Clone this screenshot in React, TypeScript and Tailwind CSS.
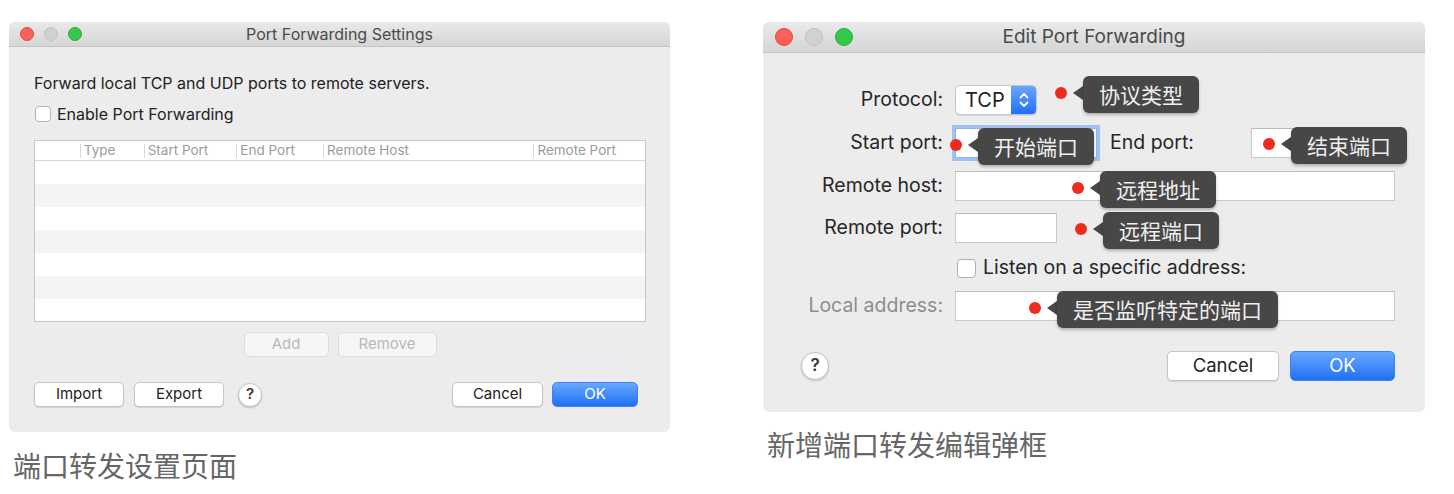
import React from 'react';

function Lights({ big }: { big?: boolean }) {
  const s = big ? 'w-[18px] h-[18px]' : 'w-[14px] h-[14px]';
  return (
    <div className={big ? 'flex items-center gap-[12px] pl-[12px]' : 'flex items-center gap-[10px] pl-[11px]'}>
      <span className={`${s} rounded-full bg-[#fc605b] border border-[#e0493f]`} />
      <span className={`${s} rounded-full bg-[#d1d1d1] border border-[#c0c0c0]`} />
      <span className={`${s} rounded-full bg-[#35c84b] border border-[#28ad3b]`} />
    </div>
  );
}

function Btn({ w, children, primary, disabled }: { w: string; children: React.ReactNode; primary?: boolean; disabled?: boolean }) {
  let look = 'bg-white border border-[#c6c6c6] text-[#222] shadow-[0_1px_1px_rgba(0,0,0,0.12)]';
  if (primary) look = 'bg-gradient-to-b from-[#66a8fc] to-[#1e6ff5] border border-[#3d83f3] text-white';
  if (disabled) look = 'bg-[#f6f6f6] border border-[#dcdcdc] text-[#b9b9b9]';
  return <div className={`${w} h-full rounded-[5px] flex items-center justify-center ${look}`}>{children}</div>;
}

function Help({ size }: { size: string }) {
  return (
    <div className={`${size} rounded-full bg-white border border-[#c4c4c4] shadow-[0_1px_2px_rgba(0,0,0,0.2)] flex items-center justify-center font-semibold text-[#333]`}>
      ?
    </div>
  );
}

function Tip({ pos, text }: { pos: string; text: string }) {
  return (
    <div className={`absolute ${pos} flex items-center h-[37px]`}>
      <div className="flex items-center mb-[4px]">
        <span className="w-[12px] h-[12px] rounded-full bg-[#ee2b1e]" />
        <span className="ml-[6px] w-0 h-0 border-y-[7px] border-y-transparent border-r-[10px] border-r-[#474747]" />
      </div>
      <span className="h-[37px] px-[16px] flex items-center rounded-[6px] bg-[#474747] text-[#efefef] text-[21px] font-['Noto_Sans_CJK_SC',sans-serif] shadow-[0_2px_3px_rgba(0,0,0,0.25)]">
        {text}
      </span>
    </div>
  );
}

const cols = [
  { w: 'w-[45px]', label: '' },
  { w: 'w-[64px]', label: 'Type' },
  { w: 'w-[93px]', label: 'Start Port' },
  { w: 'w-[87px]', label: 'End Port' },
  { w: 'w-[211px]', label: 'Remote Host' },
  { w: 'w-[112px]', label: 'Remote Port' },
];

function SettingsWindow() {
  return (
    <div className="w-[661px] h-[410px] rounded-[6px] bg-[#ececec] overflow-hidden flex flex-col">
      <div className="h-[25px] grid grid-cols-[1fr_auto_1fr] items-center bg-gradient-to-b from-[#e9e9e9] to-[#d6d6d6] border-b border-[#c4c4c4]">
        <Lights />
        <div className="text-[16px] text-[#4b4b4b]">Port Forwarding Settings</div>
        <div />
      </div>
      <div className="flex flex-col pl-[25px] pr-[24px] text-[#222]">
        <div className="mt-[26px] text-[16px] leading-[20px]">Forward local TCP and UDP ports to remote servers.</div>
        <div className="mt-[13px] flex items-center h-[16px] text-[16px]">
          <span className="ml-[1px] w-[16px] h-[16px] rounded-[4px] bg-white border border-[#b3b3b3]" />
          <span className="ml-[6px]">Enable Port Forwarding</span>
        </div>
        <div className="mt-[18px] h-[182px] overflow-hidden bg-white border border-[#c6c6c6] flex flex-col">
          <div className="h-[20px] shrink-0 flex border-b border-[#d6d6d6]">
            {cols.map((c, i) => (
              <div key={i} className={`${c.w} flex items-center text-[13.5px] text-[#9b9b9b]`}>
                {i > 0 && <span className="w-px h-[14px] bg-[#dadada]" />}
                <span className="pl-[3px]">{c.label}</span>
              </div>
            ))}
          </div>
          {[0, 1, 2, 3, 4, 5, 6].map((r) => (
            <div key={r} className={r % 2 ? 'h-[23px] shrink-0 bg-[#f4f4f4]' : 'h-[23px] shrink-0 bg-white'} />
          ))}
        </div>
        <div className="mt-[10px] h-[25px] flex justify-center gap-[9px] text-[15px]">
          <Btn w="w-[85px]" disabled>Add</Btn>
          <Btn w="w-[99px]" disabled>Remove</Btn>
        </div>
        <div className="mt-[25px] h-[25px] flex items-center text-[15px] mr-[8px]">
          <Btn w="w-[90px]">Import</Btn>
          <div className="ml-[10px] h-full flex">
            <Btn w="w-[90px]">Export</Btn>
          </div>
          <div className="ml-[14px]">
            <Help size="w-[24px] h-[24px] text-[15px]" />
          </div>
          <div className="flex-1" />
          <Btn w="w-[91px]">Cancel</Btn>
          <div className="ml-[9px] h-full flex">
            <Btn w="w-[86px]" primary>OK</Btn>
          </div>
        </div>
      </div>
    </div>
  );
}

function Field({ w, focus }: { w: string; focus?: boolean }) {
  return (
    <div
      className={`${w} h-full bg-white border ${
        focus ? 'border-[#8db4ee] shadow-[0_0_0_3px_#9ec2f3]' : 'border-[#c9c9c9] border-t-[#bdbdbd]'
      }`}
    />
  );
}

function EditWindow() {
  const label = 'w-[180px] shrink-0 text-right';
  return (
    <div className="relative w-[662px] h-[390px] rounded-[6px] bg-[#ececec] overflow-hidden flex flex-col">
      <div className="h-[31px] shrink-0 grid grid-cols-[1fr_auto_1fr] items-center bg-gradient-to-b from-[#eaeaea] to-[#d5d5d5] border-b border-[#c4c4c4]">
        <Lights big />
        <div className="text-[19px] text-[#4a4a4a]">Edit Port Forwarding</div>
        <div />
      </div>
      <div className="flex flex-col pr-[30px] text-[19.5px] text-[#262626]">
        <div className="mt-[32px] h-[30px] flex items-center gap-[12px]">
          <div className={label}>Protocol:</div>
          <div className="h-full w-[82px] flex rounded-[5px] border border-[#c6c6c6] bg-white shadow-[0_1px_1px_rgba(0,0,0,0.1)] overflow-hidden">
            <div className="w-[55px] flex items-center pl-[9px] text-[20px] text-[#222]">TCP</div>
            <div className="flex-1 bg-gradient-to-b from-[#68a7fb] to-[#1e6ff4] flex items-center justify-center">
              <svg width="12" height="20" viewBox="0 0 12 20" fill="none" stroke="white" strokeWidth="1.8" strokeLinecap="round" strokeLinejoin="round">
                <path d="M2.5 7.5 6 4l3.5 3.5" />
                <path d="M2.5 12.5 6 16l3.5-3.5" />
              </svg>
            </div>
          </div>
        </div>
        <div className="mt-[13px] h-[30px] flex items-center">
          <div className={label}>Start port:</div>
          <div className="ml-[12px] h-full flex">
            <Field w="w-[142px]" focus />
          </div>
          <div className="ml-[13px] w-[141px]">End port:</div>
          <div className="h-full flex">
            <Field w="w-[144px]" />
          </div>
        </div>
        <div className="mt-[13px] h-[30px] flex items-center gap-[12px]">
          <div className={label}>Remote host:</div>
          <Field w="flex-1" />
        </div>
        <div className="mt-[12px] h-[30px] flex items-center gap-[12px]">
          <div className={label}>Remote port:</div>
          <Field w="w-[102px]" />
        </div>
        <div className="mt-[15px] h-[20px] flex items-center">
          <div className="w-[180px] shrink-0" />
          <span className="ml-[14px] w-[19px] h-[19px] rounded-[4px] bg-white border border-[#b0b0b0]" />
          <span className="ml-[7px]">Listen on a specific address:</span>
        </div>
        <div className="mt-[13px] h-[30px] flex items-center gap-[12px]">
          <div className={`${label} text-[#8c8c8c]`}>Local address:</div>
          <Field w="flex-1" />
        </div>
        <div className="mt-[30px] h-[30px] flex items-center text-[18.5px]">
          <div className="ml-[38px]">
            <Help size="w-[28px] h-[28px] text-[17px]" />
          </div>
          <div className="flex-1" />
          <Btn w="w-[112px]">Cancel</Btn>
          <div className="ml-[11px] h-full flex">
            <Btn w="w-[105px]" primary>OK</Btn>
          </div>
        </div>
      </div>
      <Tip pos="left-[292px] top-[54px]" text="协议类型" />
      <Tip pos="left-[187px] top-[106px]" text="开始端口" />
      <Tip pos="left-[500px] top-[105px]" text="结束端口" />
      <Tip pos="left-[309px] top-[149px]" text="远程地址" />
      <Tip pos="left-[312px] top-[190px]" text="远程端口" />
      <Tip pos="left-[266px] top-[269px]" text="是否监听特定的端口" />
    </div>
  );
}

export default function App() {
  return (
    <div className="w-[1454px] h-[494px] bg-white flex pt-[22px] pl-[9px] gap-[93px] font-['Inter','Noto_Sans_CJK_SC',sans-serif]">
      <div className="flex flex-col">
        <SettingsWindow />
        <div className="mt-[15px] pl-[4px] text-[28px] leading-[36px] text-[#666] font-['Noto_Sans_CJK_SC',sans-serif]">端口转发设置页面</div>
      </div>
      <div className="flex flex-col">
        <EditWindow />
        <div className="mt-[14px] pl-[4px] text-[28px] leading-[36px] text-[#666] font-['Noto_Sans_CJK_SC',sans-serif]">新增端口转发编辑弹框</div>
      </div>
    </div>
  );
}
